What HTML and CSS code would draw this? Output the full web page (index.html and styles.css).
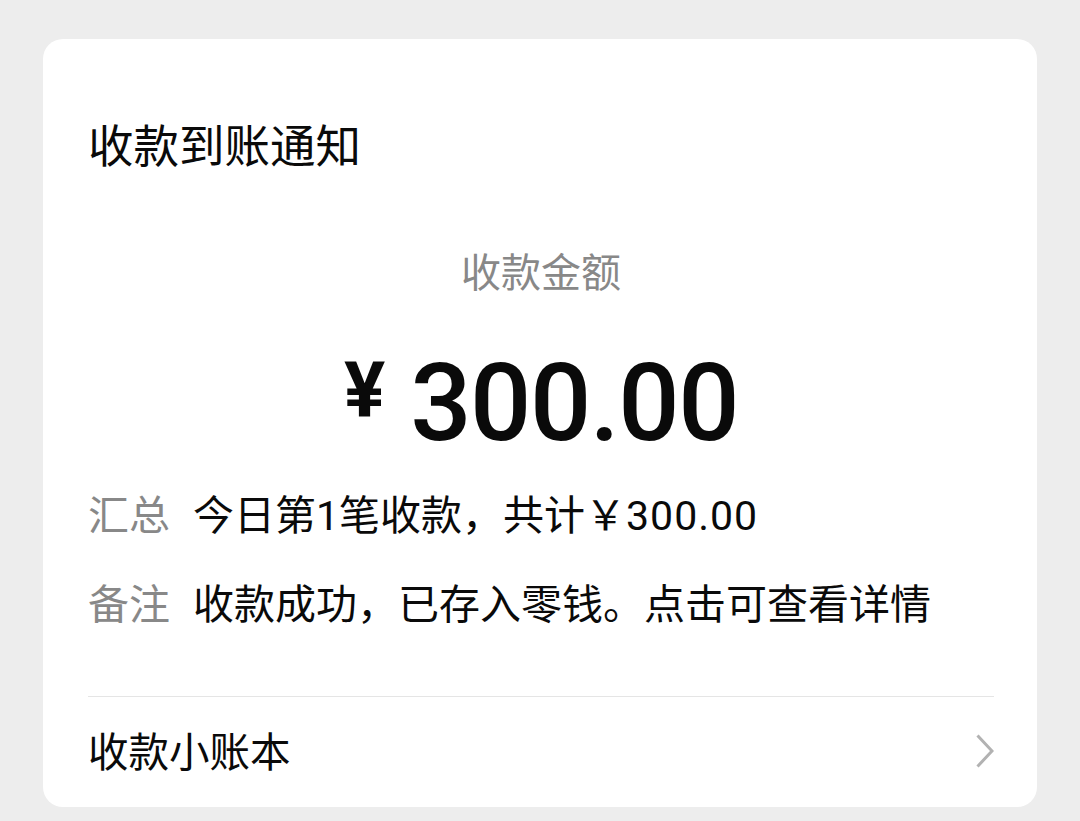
FILE: index.html
```html
<!DOCTYPE html>
<html lang="zh-CN">
<head>
    <meta charset="UTF-8">
    <title>收款到账通知</title>
    <link rel="stylesheet" href="styles.css">
</head>
<body>
    <div class="card">
        <div class="card-title">收款到账通知</div>

        <div class="amount-label">收款金额</div>
        <div class="amount">
            <span class="amount-currency">¥</span>
            <span class="amount-value">300.00</span>
        </div>

        <div class="detail-row detail-first">
            <span class="detail-key">汇总</span>
            <span class="detail-value">今日第1笔收款，共计￥<span class="num">300.00</span></span>
        </div>
        <div class="detail-row">
            <span class="detail-key">备注</span>
            <span class="detail-value">收款成功，已存入零钱。点击可查看详情</span>
        </div>

        <div class="card-footer">
            <span class="footer-text">收款小账本</span>
            <svg class="chevron" width="18" height="34" viewBox="0 0 18 34">
                <polyline points="1.5,1.5 16,17 1.5,32.5" fill="none" stroke="#b2b2b2" stroke-width="3"/>
            </svg>
        </div>
    </div>
</body>
</html>
```

FILE: styles.css
```css
/* 全体 */
body {
    margin: 0;
    background-color: #ededed;
    font-family: Roboto, "Noto Sans CJK SC", sans-serif;
    color: #0a0a0a;
}

/* カード */
.card {
    margin: 39px 43px 0;
    background-color: #fff;
    border-radius: 20px;
    padding: 82px 43px 0 45px;
    box-sizing: border-box;
    height: 768px;
}

.card-title {
    font-size: 45.5px;
    line-height: 54px;
}

/* 金額 */
.amount-label {
    margin-top: 75px;
    text-align: center;
    font-size: 40px;
    line-height: 48px;
    color: #888;
}

.amount {
    margin-top: 51px;
    display: flex;
    justify-content: center;
    align-items: flex-start;
}

.amount-currency {
    font-size: 77px;
    line-height: 1;
    font-weight: 700;
    margin-top: 4px;
    margin-right: 25px;
}

.amount-value {
    font-size: 108px;
    line-height: 1;
    font-weight: 500;
    letter-spacing: -1.5px;
}

/* 詳細 */
.detail-row {
    display: flex;
    font-size: 41px;
    line-height: 48px;
    margin-top: 41px;
    white-space: nowrap;
}

.detail-first {
    margin-top: 35px;
}

.detail-key {
    color: #888;
    width: 82px;
    margin-right: 23px;
    flex-shrink: 0;
}

.detail-value .num {
    letter-spacing: 1px;
}

/* フッター */
.card-footer {
    margin-top: 67px;
    border-top: 1px solid #e5e5e5;
    height: 109px;
    display: flex;
    align-items: center;
    justify-content: space-between;
}

.footer-text {
    font-size: 40.5px;
    line-height: 48px;
    padding-top: 3px;
}

.chevron {
    display: block;
    margin-top: -2px;
}
```
